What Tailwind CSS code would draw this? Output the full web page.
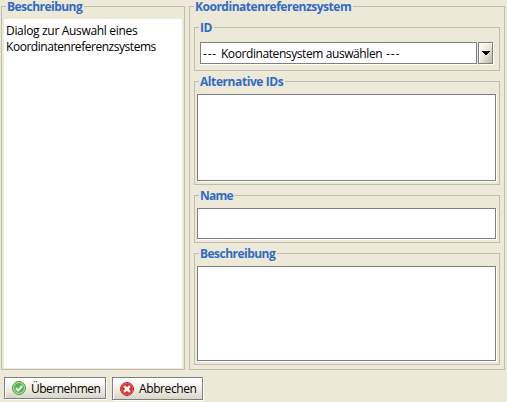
<!DOCTYPE html>
<html lang="de">
<head>
<meta charset="utf-8">
<title>Koordinatenreferenzsystem</title>
<script src="https://cdn.jsdelivr.net/npm/@tailwindcss/browser@4"></script>
</head>
<body class="h-[402px] w-[507px] overflow-hidden bg-[#ece9d8] font-['Open_Sans','Noto_Sans',sans-serif] text-[12px] leading-4 text-black">
<main class="flex h-[370px] gap-1 pl-px">
  <fieldset class="h-[370px] w-[184px] border border-[#bfbeac] pl-[2px]">
    <legend class="ml-[2px] h-[13px] px-px font-bold leading-[14px] whitespace-nowrap text-[#316ac5]"><span class="block w-[76px] tracking-[-0.53px]">Beschreibung</span></legend>
    <div class="mt-[6px] h-[349px] w-[178px] bg-white pt-[4px] pl-[2px] whitespace-nowrap">
      <p class="tracking-[-0.32px]">Dialog zur Auswahl eines</p>
      <p class="tracking-[-0.46px]">Koordinatenreferenzsystems</p>
    </div>
  </fieldset>

  <fieldset class="h-[370px] w-[316px] border border-[#bfbeac] pl-1">
    <legend class="h-[13px] px-px font-bold leading-[14px] whitespace-nowrap text-[#316ac5]"><span class="block w-[157px] tracking-[-0.48px]">Koordinatenreferenzsystem</span></legend>
    <div class="flex flex-col gap-1 pt-2">
      <fieldset class="h-[50px] w-[306px] border border-[#bfbeac] pl-[5px]">
        <legend class="-ml-px h-[13px] px-px font-bold leading-[13px] text-[#316ac5]"><span class="block w-[13px] tracking-[-0.35px]">ID</span></legend>
        <div class="flex gap-px pt-2">
          <div class="h-[22px] w-[277px] border border-[#808080] bg-white pl-[2px] leading-[22px] whitespace-pre shadow-[0_1px_0_#fff]"><span class="tracking-[0.8px]">--- </span><span class="tracking-[-0.41px]">Koordinatensystem auswählen</span><span class="tracking-[0.8px]"> ---</span></div>
          <button class="flex h-[22px] w-[15px] items-center justify-center border border-[#808080] bg-linear-to-br from-white via-[#ece9d8] to-[#b8b5a5] shadow-[1px_1px_0_#fff,inset_1px_1px_0_#fff]" aria-label="Auswahl öffnen">
            <svg width="8" height="4" viewBox="0 0 8 4" shape-rendering="crispEdges"><path d="M0 0h8v1H7v1H6v1H5v1H3V3H2V2H1V1H0z"/></svg>
          </button>
        </div>
      </fieldset>
      <fieldset class="h-[110px] w-[306px] border border-[#bfbeac] pl-[2px]">
        <legend class="ml-[2px] h-[13px] px-px font-bold leading-[13px] whitespace-nowrap text-[#316ac5]"><span class="block w-[84px] tracking-[-0.42px]">Alternative IDs</span></legend>
        <div class="mt-[6px] h-[87px] w-[299px] border border-[#808080] bg-white shadow-[1px_1px_0_#fff]"></div>
      </fieldset>
      <fieldset class="h-[54px] w-[306px] border border-[#bfbeac] pl-[2px]">
        <legend class="ml-[2px] h-[13px] px-px font-bold leading-[13px] text-[#316ac5]"><span class="block w-[33px] tracking-[-0.75px]">Name</span></legend>
        <div class="mt-[6px] h-[31px] w-[299px] border border-[#808080] bg-white shadow-[1px_1px_0_#fff]"></div>
      </fieldset>
      <fieldset class="h-[118px] w-[306px] border border-[#bfbeac] pl-[2px]">
        <legend class="ml-[2px] h-[13px] px-px font-bold leading-[13px] whitespace-nowrap text-[#316ac5]"><span class="block w-[76px] tracking-[-0.53px]">Beschreibung</span></legend>
        <div class="mt-[6px] h-[95px] w-[299px] border border-[#808080] bg-white shadow-[1px_1px_0_#fff]"></div>
      </fieldset>
    </div>
  </fieldset>
</main>

<footer class="flex items-start gap-[6px] pt-[7px] pl-1">
  <button class="flex h-[22px] w-[102px] items-center gap-[5px] border border-[#808080] bg-linear-to-b from-white via-[#f2f0e7] to-[#d8d5c8] pl-[7px] whitespace-nowrap shadow-[1px_1px_0_#fff,inset_1px_1px_0_#fff]">
    <svg width="14" height="14" viewBox="0 0 14 14" class="shrink-0"><circle cx="7" cy="7" r="6.5" fill="#b5dfaa" stroke="#429b3b"/><circle cx="7" cy="7" r="5" fill="#5cb552"/><path d="M4 7.2l2.2 2.2L10.2 5" fill="none" stroke="#fff" stroke-width="2"/></svg>
    <span class="pt-[2px] tracking-[-0.5px]">Übernehmen</span>
  </button>
  <button class="flex h-[23px] w-[91px] items-center gap-[5px] border border-[#808080] bg-linear-to-b from-white via-[#f2f0e7] to-[#d8d5c8] pl-[7px] whitespace-nowrap shadow-[1px_1px_0_#fff,inset_1px_1px_0_#fff]">
    <svg width="14" height="14" viewBox="0 0 14 14" class="shrink-0"><circle cx="7" cy="7" r="6.5" fill="#ec8a8a" stroke="#c9252b"/><circle cx="7" cy="7" r="5.8" fill="#dc2f34"/><path d="M4.1 4.1l5.8 5.8M9.9 4.1L4.1 9.9" stroke="#fff" stroke-width="2.5"/></svg>
    <span class="tracking-[-0.4px]">Abbrechen</span>
  </button>
</footer>
</body>
</html>
